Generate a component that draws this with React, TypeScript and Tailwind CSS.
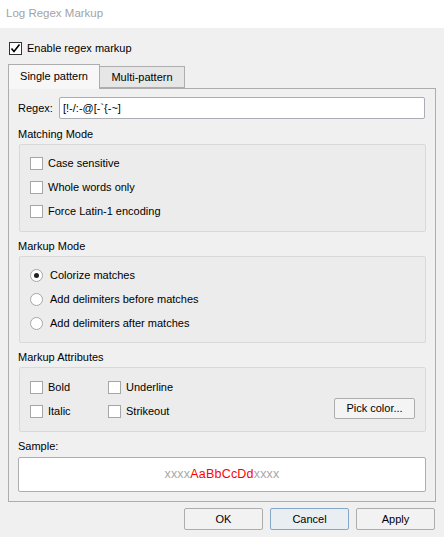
import React from 'react';

const Check: React.FC<{ label: string; checked?: boolean; dark?: boolean }> = ({ label, checked, dark }) => (
  <div className="flex items-center gap-[5px]">
    <div
      className={`w-[13px] h-[13px] bg-white border flex items-center justify-center ${dark ? 'border-[#333]' : 'border-[#a6a6a6]'}`}
    >
      {checked && (
        <svg width="11" height="11" viewBox="0 0 11 11">
          <path d="M1.5 5.5 L4 8.5 L9.5 1.5" fill="none" stroke="#000" strokeWidth="1.6" />
        </svg>
      )}
    </div>
    <span>{label}</span>
  </div>
);

const Radio: React.FC<{ label: string; checked?: boolean }> = ({ label, checked }) => (
  <div className="flex items-center gap-[7px]">
    <div className="w-[13px] h-[13px] rounded-full bg-white border border-[#a6a6a6] flex items-center justify-center">
      {checked && <div className="w-[5px] h-[5px] rounded-full bg-[#222]" />}
    </div>
    <span>{label}</span>
  </div>
);

const Group: React.FC<{ className?: string; children: React.ReactNode }> = ({ className, children }) => (
  <div className={`mt-[2px] border border-[#d9d9d9] bg-[#ececec] rounded-[2px] ${className ?? ''}`}>{children}</div>
);

const REGEX = '[!-/:-@[-`{-~]';

export default function App() {
  return (
    <div
      className="w-[444px] h-[537px] bg-[#f0f0f0] text-[11px] text-black flex flex-col"
      style={{ fontFamily: '"Liberation Sans", Arial, sans-serif' }}
    >
      <div className="h-[28px] bg-white pl-[6px] text-[#a3a3a3] leading-[26px] text-[11.5px]">Log Regex Markup</div>

      <div className="px-[8px] flex flex-col">
        <div className="pt-[12px] pl-[1px] h-[35px]">
          <Check label="Enable regex markup" checked dark />
        </div>

        <div className="flex items-end h-[25px]">
          <div className="h-[25px] w-[92px] border border-b-0 border-[#adadad] bg-[#f7f7f7] flex items-center justify-center relative z-10 -mb-px pb-[2px]">
            Single pattern
          </div>
          <div className="h-[22px] w-[85px] border border-l-0 border-[#adadad] bg-[#e6e6e6] flex items-center justify-center">
            Multi-pattern
          </div>
        </div>

        <div className="h-[414px] w-[428px] border border-[#adadad] bg-[#f0f0f0] px-[9px] pt-[8px] flex flex-col">
          <div className="flex items-center h-[22px]">
            <span className="w-[41px]">Regex:</span>
            <div className="flex-1 h-[22px] bg-white border border-[#abadb3] rounded-[2px] flex items-center px-[3px] mr-[1px]">
              {REGEX}
            </div>
          </div>

          <div className="mt-[7px] h-[16px] leading-[16px]">Matching Mode</div>
          <Group className="ml-[1px] h-[88px] pt-[6px] pl-[10px]">
            <div className="h-[24px] flex items-center"><Check label="Case sensitive" /></div>
            <div className="h-[24px] flex items-center"><Check label="Whole words only" /></div>
            <div className="h-[24px] flex items-center"><Check label="Force Latin-1 encoding" /></div>
          </Group>

          <div className="mt-[6px] h-[16px] leading-[16px]">Markup Mode</div>
          <Group className="ml-[1px] h-[87px] pt-[6px] pl-[10px]">
            <div className="h-[24px] flex items-center"><Radio label="Colorize matches" checked /></div>
            <div className="h-[24px] flex items-center"><Radio label="Add delimiters before matches" /></div>
            <div className="h-[24px] flex items-center"><Radio label="Add delimiters after matches" /></div>
          </Group>

          <div className="mt-[6px] h-[16px] leading-[16px]">Markup Attributes</div>
          <Group className="ml-[1px] h-[65px] pt-[7px] pl-[10px] pr-[10px] flex">
            <div className="flex flex-col w-[78px]">
              <div className="h-[24px] flex items-center"><Check label="Bold" /></div>
              <div className="h-[24px] flex items-center"><Check label="Italic" /></div>
            </div>
            <div className="flex flex-col flex-1">
              <div className="h-[24px] flex items-center"><Check label="Underline" /></div>
              <div className="h-[24px] flex items-center"><Check label="Strikeout" /></div>
            </div>
            <div className="flex items-start pt-[23px]">
              <div className="w-[81px] h-[21px] border border-[#adadad] rounded-[2px] bg-[#f4f4f4] flex items-center justify-center">
                Pick color...
              </div>
            </div>
          </Group>

          <div className="mt-[6px] h-[16px] leading-[16px]">Sample:</div>
          <div className="mt-[3px] h-[35px] bg-white border border-[#adadad] rounded-[2px] flex items-center justify-center">
            <span className="text-[12.5px] tracking-[0.2px]">
              <span className="text-[#a8a8a8]">xxxx</span>
              <span className="text-[#ff0000]">AaBbCcDd</span>
              <span className="text-[#a8a8a8]">xxxx</span>
            </span>
          </div>
        </div>

        <div className="flex justify-end gap-[7px] mt-[6px] pr-[1px]">
          <div className="w-[79px] h-[22px] border border-[#adadad] rounded-[2px] bg-[#f2f2f2] flex items-center justify-center">OK</div>
          <div className="w-[79px] h-[22px] border border-[#86a6c8] rounded-[2px] bg-[#e9eef3] flex items-center justify-center">Cancel</div>
          <div className="w-[79px] h-[22px] border border-[#adadad] rounded-[2px] bg-[#f2f2f2] flex items-center justify-center">Apply</div>
        </div>
      </div>
    </div>
  );
}
